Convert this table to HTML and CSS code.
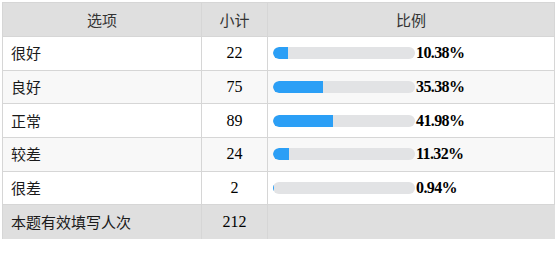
FILE: index.html
```html
<!DOCTYPE html>
<html lang="zh-CN">
<head>
<meta charset="utf-8">
<title>统计</title>
<link rel="stylesheet" href="styles.css">
</head>
<body>
<table class="stats">
  <colgroup>
    <col class="col-opt">
    <col class="col-cnt">
    <col class="col-pct">
  </colgroup>
  <thead>
    <tr><th>选项</th><th>小计</th><th>比例</th></tr>
  </thead>
  <tbody>
    <tr>
      <td class="opt">很好</td><td class="cnt">22</td>
      <td class="pct"><div class="bar"><div class="track"><div class="fill" style="width:10.38%"></div></div><span class="val">10.38%</span></div></td>
    </tr>
    <tr class="alt">
      <td class="opt">良好</td><td class="cnt">75</td>
      <td class="pct"><div class="bar"><div class="track"><div class="fill" style="width:35.38%"></div></div><span class="val">35.38%</span></div></td>
    </tr>
    <tr>
      <td class="opt">正常</td><td class="cnt">89</td>
      <td class="pct"><div class="bar"><div class="track"><div class="fill" style="width:41.98%"></div></div><span class="val">41.98%</span></div></td>
    </tr>
    <tr class="alt">
      <td class="opt">较差</td><td class="cnt">24</td>
      <td class="pct"><div class="bar"><div class="track"><div class="fill" style="width:11.32%"></div></div><span class="val">11.32%</span></div></td>
    </tr>
    <tr>
      <td class="opt">很差</td><td class="cnt">2</td>
      <td class="pct"><div class="bar"><div class="track"><div class="fill" style="width:0.94%"></div></div><span class="val">0.94%</span></div></td>
    </tr>
  </tbody>
  <tfoot>
    <tr><td class="opt">本题有效填写人次</td><td class="cnt">212</td><td class="pct"></td></tr>
  </tfoot>
</table>
</body>
</html>
```
FILE: styles.css
```css
html, body {
  margin: 0;
  padding: 0;
  background: #fff;
}
body {
  padding: 2px;
}
.stats {
  border-collapse: separate;
  border-spacing: 0;
  table-layout: fixed;
  width: 553px;
  border-top: 1px solid #d6d6d6;
  border-left: 1px solid #d6d6d6;
  font-family: "Noto Sans CJK SC", "Noto Sans", sans-serif;
  font-size: 15px;
  color: #1a1a1a;
}
.col-opt { width: 199px; }
.col-cnt { width: 66px; }
.col-pct { width: 287px; }

.stats th,
.stats td {
  box-sizing: border-box;
  height: 33.7px;
  padding: 0;
  border-right: 1px solid #d6d6d6;
  border-bottom: 1px solid #d6d6d6;
  vertical-align: middle;
  line-height: 20px;
}
.stats th {
  height: 34px;
  background: #dfdfdf;
  font-weight: normal;
  color: #333;
  text-align: center;
}
.stats tbody tr { background: #fff; }
.stats tbody tr.alt { background: #f8f8f8; }
.stats tfoot td {
  background: #dfdfdf;
  border-bottom: none;
}
.stats tfoot td.pct { border-right: none; }

.opt {
  padding-left: 8px !important;
  text-align: left;
}
.cnt {
  text-align: center;
  font-family: "Liberation Serif", "Times New Roman", serif;
  font-size: 16px;
  color: #000;
}
.pct {
  padding-left: 5px !important;
}
.bar {
  display: flex;
  align-items: center;
}
.track {
  width: 142px;
  height: 12px;
  border-radius: 6px;
  background: #e2e3e5;
  overflow: hidden;
}
.fill {
  height: 100%;
  background: #2b9ff6;
  border-radius: 6px 0 0 6px;
}
.val {
  font-family: "Liberation Serif", "Times New Roman", serif;
  font-weight: bold;
  font-size: 16px;
  letter-spacing: -0.6px;
  color: #000;
  margin-left: 1px;
}
```
